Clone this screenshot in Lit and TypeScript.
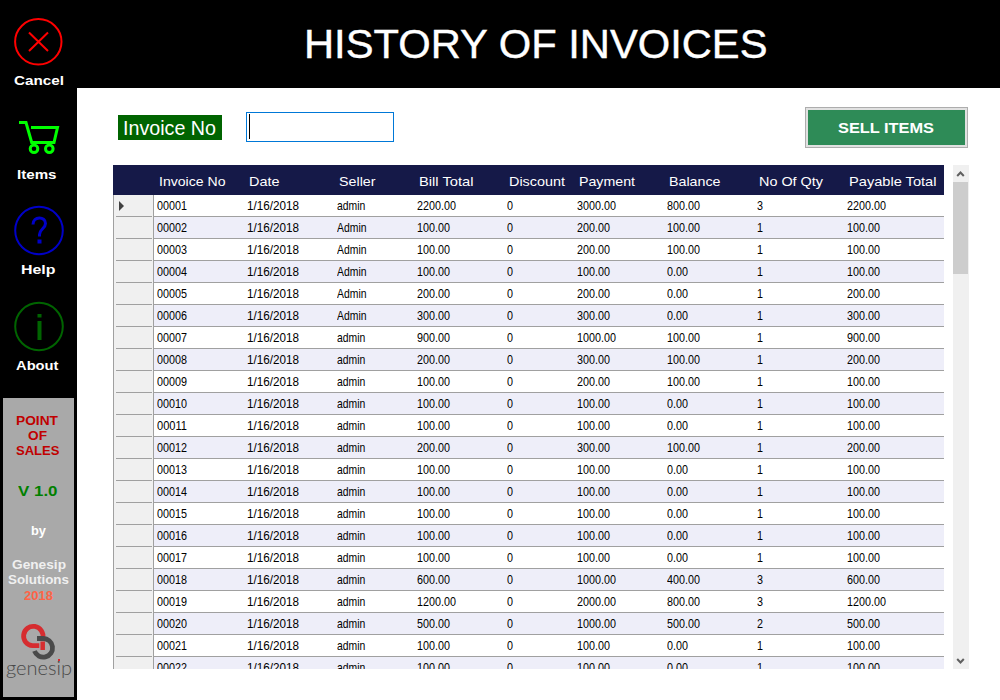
import { LitElement, html, css, svg } from "lit";
import { customElement, property, query } from "lit/decorators.js";
import { classMap } from "lit/directives/class-map.js";

/** One line of text, drawn exactly `w` pixels wide. */
@customElement("fit-text")
class FitText extends LitElement {
  @property() text = "";
  @property({ type: Number }) w = 0;
  @property({ type: Number }) x = 0;
  @query("span") span!: HTMLSpanElement;

  static styles = css`
    :host { display: block; white-space: pre; }
    span { display: inline-block; transform-origin: 0 50%; }
  `;

  updated() {
    const natural = this.span.offsetWidth ? parseFloat(getComputedStyle(this.span).width) : 0;
    if (natural) this.span.style.transform = `scaleX(${this.w / natural})`;
    this.style.paddingLeft = `${this.x}px`;
    this.style.width = `${this.w}px`;
  }

  render() {
    return html`<span>${this.text}</span>`;
  }
}

const columns: [string, number][] = [
  ["Invoice No", 66.5], ["Date", 30.5], ["Seller", 36.5], ["Bill Total", 54.5],
  ["Discount", 56], ["Payment", 56], ["Balance", 51.5], ["No Of Qty", 64], ["Payable Total", 87.5],
];

// seller, bill, payment, balance, quantity
const sales: [string, number, number, number, number][] = [
  ["admin", 2200, 3000, 800, 3],
  ["Admin", 100, 200, 100, 1],
  ["Admin", 100, 200, 100, 1],
  ["Admin", 100, 100, 0, 1],
  ["Admin", 200, 200, 0, 1],
  ["Admin", 300, 300, 0, 1],
  ["admin", 900, 1000, 100, 1],
  ["admin", 200, 300, 100, 1],
  ["admin", 100, 200, 100, 1],
  ["admin", 100, 100, 0, 1],
  ["admin", 100, 100, 0, 1],
  ["admin", 200, 300, 100, 1],
  ["admin", 100, 100, 0, 1],
  ["admin", 100, 100, 0, 1],
  ["admin", 100, 100, 0, 1],
  ["admin", 100, 100, 0, 1],
  ["admin", 100, 100, 0, 1],
  ["admin", 600, 1000, 400, 3],
  ["admin", 1200, 2000, 800, 3],
  ["admin", 500, 1000, 500, 2],
  ["admin", 100, 100, 0, 1],
  ["admin", 100, 100, 0, 1],
];

const advance: Record<string, number> = { ".": 3, "/": 5, A: 7, a: 5.8, d: 6, m: 8.4, i: 2.4, n: 5.7 };
const widthOf = (s: string) => [...s].reduce((sum, c) => sum + (advance[c] ?? 6), 0);

@customElement("invoice-grid")
class InvoiceGrid extends LitElement {
  static styles = css`
    :host { display: block; width: 831px; height: 504px; overflow: hidden; }
    .row {
      display: grid;
      grid-template-columns: 41px 90px 90px 80px 90px 70px 90px 90px 90px 100px;
    }
    .head { height: 30px; background: #151948; color: #fff; font-size: 13.6px; line-height: 33px; }
    .head fit-text { margin-left: 4.5px; }
    .body { height: 22px; font-size: 12.8px; line-height: 22px; color: #000; background: #fff; }
    .alt { background: #eeeef9; }
    .cell { border-bottom: 1px solid #a0a0a0; box-sizing: border-box; height: 22px; padding-left: 3px; }
    .stub {
      box-sizing: border-box; height: 22px; padding-left: 2px;
      border-left: 1px solid #a0a0a0; border-right: 1px solid #a0a0a0; background: #f0f0f0;
    }
    .stub div { box-sizing: border-box; width: 36px; height: 22px; border-bottom: 1px solid #a0a0a0; }
    svg { display: block; }
  `;

  render() {
    return html`
      <div class="row head">
        <div></div>
        ${columns.map(([name, w]) => html`<fit-text .text=${name} .w=${w}></fit-text>`)}
      </div>
      ${sales.map(([seller, bill, paid, balance, qty], i) => {
        const cells = [
          String(i + 1).padStart(5, "0"), "1/16/2018", seller, bill.toFixed(2), "0",
          paid.toFixed(2), balance.toFixed(2), String(qty), bill.toFixed(2),
        ];
        return html`<div class=${classMap({ row: true, body: true, alt: i % 2 === 1 })}>
          <div class="stub"><div>${i === 0
            ? html`<svg width="12" height="20"><path d="M3 6v10l5-5z" fill="#404040"/></svg>` : ""}</div></div>
          ${cells.map((c) => html`<div class="cell"><fit-text .text=${c} .w=${widthOf(c)}></fit-text></div>`)}
        </div>`;
      })}
    `;
  }
}

const cancelIcon = svg`<g fill="none" stroke="#f00" stroke-width="2">
  <ellipse cx="38.3" cy="41.8" rx="23.2" ry="22.7"/><path d="M29 32.500L48 51M48 32.500L29 51"/></g>`;
const cartIcon = svg`<g fill="none" stroke="#0f0" stroke-width="3">
  <path d="M19 28.500H26L31.700 48.500H54L57.500 33.500H31"/>
  <circle cx="34" cy="54.800" r="3.800"/><circle cx="49.300" cy="54.800" r="3.800"/></g>`;
const helpIcon = svg`<g fill="none" stroke="#0000c8">
  <circle cx="39" cy="41.500" r="23.800" stroke-width="2"/>
  <path d="M33 35.500C33 27 45.500 27 45.500 34.500C45.500 39.500 39.500 40 39.500 45.500V47.500" stroke-width="3"/>
  <path d="M39.500 50.500V54.500" stroke-width="4"/></g>`;
const aboutIcon = svg`<g fill="none" stroke="#006400">
  <circle cx="39" cy="41.500" r="23.800" stroke-width="2"/>
  <path d="M39.500 29V32.500M39.500 36V55" stroke-width="4"/></g>`;

@customElement("app-root")
class AppRoot extends LitElement {
  static styles = css`
    :host {
      display: grid; grid-template-columns: 77px 1fr; width: 1000px; height: 700px;
      overflow: hidden; background: #fff; font-family: "Liberation Sans", Arial, sans-serif;
    }
    svg { display: block; }
    .side { background: #000; height: 700px; color: #fff; font-weight: bold; }
    .item { height: 94px; font-size: 13.6px; line-height: 20px; }
    .item.tall { height: 95px; }
    .item.taller { height: 96px; }
    .item svg { width: 77px; height: 70px; }
    .item fit-text { padding-top: 1px; }
    .item.about { height: 113px; }
    .info {
      margin-left: 3px; width: 71px; height: 299px; box-sizing: border-box; padding-top: 15px;
      background: #a9a9a9; font-size: 13.3px; line-height: 15px;
    }
    .red { color: #c00000; }
    .version { color: #008000; font-size: 15.4px; padding: 25px 0; }
    .by { padding-bottom: 19px; }
    .pale { color: #f0f0f0; }
    .year { color: #ff6347; line-height: 16px; padding-top: 1px; }
    .logo { width: 71px; height: 38px; margin-top: 19px; }
    .brand { position: relative; font: 300 20px/22px Lato, sans-serif; color: #484848; margin-top: -5px; }
    .dot { position: absolute; left: 55px; top: 3px; width: 2px; height: 2px; background: #e0282c; }
    .main { display: grid; grid-template-rows: 88px 77px 504px; }
    .title { background: #000; color: #fff; font-size: 41px; line-height: 88px; -webkit-text-stroke: 0.4px #fff; }
    .tools { display: flex; align-items: flex-start; padding-left: 41px; }
    .label {
      box-sizing: border-box; width: 104px; height: 25px; margin-top: 27px;
      background: #006400; color: #fff; font-size: 20px; line-height: 26px;
    }
    .field {
      box-sizing: border-box; width: 148px; height: 30px; margin: 24px 411px 0 24px;
      border: 1px solid #0078d7; padding: 1px 2px;
    }
    .caret { width: 1px; height: 25px; background: #000; }
    .sell {
      box-sizing: border-box; width: 163px; height: 41px; margin-top: 19px;
      border: 1px solid #adadad; padding: 2px; background: #e1e1e1;
    }
    .sell div { height: 35px; background: #2e8b57; color: #fff; font-weight: bold; font-size: 15.4px; line-height: 35px; }
    .content { display: flex; gap: 9px; padding-left: 36px; }
    .scroll { width: 16px; height: 504px; background: #f0f0f0; display: flex; flex-direction: column; }
    .thumb { width: 15px; height: 92px; background: #cdcdcd; margin-bottom: auto; }
  `;

  render() {
    const t = (text: string, x: number, w: number) => html`<fit-text .text=${text} .x=${x} .w=${w}></fit-text>`;
    return html`
      <div class="side">
        <div class="item"><svg>${cancelIcon}</svg>${t("Cancel", 13.5, 50)}</div>
        <div class="item tall"><svg>${cartIcon}</svg>${t("Items", 16.5, 39.5)}</div>
        <div class="item taller"><svg>${helpIcon}</svg>${t("Help", 20.5, 34.5)}</div>
        <div class="item about"><svg>${aboutIcon}</svg>${t("About", 16, 42.5)}</div>
        <div class="info">
          <div class="red">${t("POINT", 12.5, 42)}${t("OF", 24.5, 19)}${t("SALES", 13, 43.5)}</div>
          <div class="version">${t("V 1.0", 15, 39.5)}</div>
          <div class="by">${t("by", 28, 15)}</div>
          <div class="pale">${t("Genesip", 9, 54)}${t("Solutions", 5, 61)}</div>
          <div class="year">${t("2018", 21, 29)}</div>
          <svg class="logo" fill="none" stroke-width="4.800">
            <path d="M39.800 15A9.700 9.700 0 1 0 29.500 22.700H36.300" stroke="#d62d30"/>
            <path d="M34 15.500H40A9.300 9.300 0 1 1 31.500 28" stroke="#4a4a4a"/>
            <path d="M39.700 18.500V27" stroke="#d62d30" stroke-width="4.500"/>
          </svg>
          <div class="brand">${t("genesip", 3, 66)}<div class="dot"></div></div>
        </div>
      </div>
      <div class="main">
        <div class="title">${t("HISTORY OF INVOICES", 226.5, 463.5)}</div>
        <div class="tools">
          <div class="label">${t("Invoice No", 4.5, 93)}</div>
          <div class="field"><div class="caret"></div></div>
          <div class="sell"><div>${t("SELL ITEMS", 29.5, 96)}</div></div>
        </div>
        <div class="content">
          <invoice-grid></invoice-grid>
          <div class="scroll">
            <svg width="16" height="17"><path d="M4.200 11L7.500 7.500L10.800 11" fill="none" stroke="#606060" stroke-width="2"/></svg>
            <div class="thumb"></div>
            <svg width="16" height="17"><path d="M4.200 7L7.500 10.500L10.800 7" fill="none" stroke="#606060" stroke-width="2"/></svg>
          </div>
        </div>
      </div>
    `;
  }
}
